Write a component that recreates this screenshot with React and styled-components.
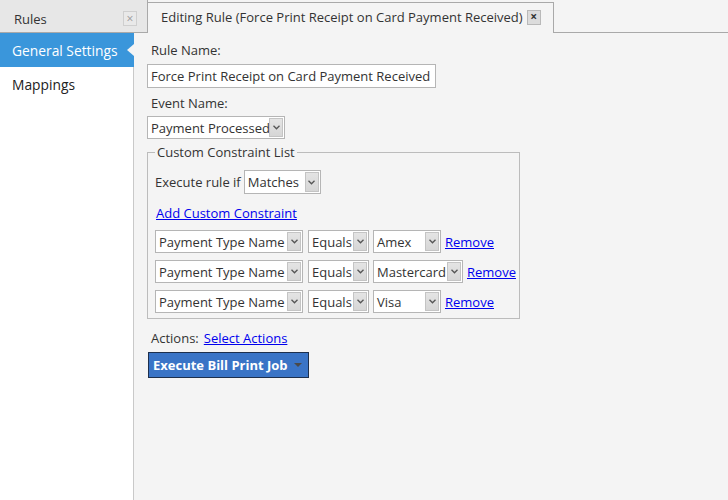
import React from 'react'
import styled, { createGlobalStyle } from 'styled-components'

const GlobalStyle = createGlobalStyle`
  html, body {
    margin: 0;
    padding: 0;
    background: #f4f4f4;
  }
  body {
    font-family: "Open Sans", "Noto Sans", "DejaVu Sans", sans-serif;
    font-size: 13px;
    color: #333;
  }
`;

const Shell = styled.div`
  display: grid;
  grid-template-rows: 33px 1fr;
  height: 500px;
  width: 728px;
  overflow: hidden;
`;

const TabStrip = styled.div`
  display: flex;
  align-items: stretch;
`;

const SideTab = styled.div`
  box-sizing: border-box;
  width: 148px;
  display: flex;
  align-items: center;
  justify-content: space-between;
  padding: 5px 10px 0 14px;
  background: #e7e7e7;
  border-right: 1px solid #a9a9a9;
  border-bottom: 1px solid #a9a9a9;
  color: #333;
`;

const DocTab = styled.div`
  box-sizing: border-box;
  margin-top: 2px;
  display: flex;
  align-items: center;
  gap: 4px;
  padding: 0 12px 2px 13px;
  background: #f4f4f4;
  border-top: 1px solid #a9a9a9;
  border-right: 1px solid #a9a9a9;
  color: #333;
`;

const TabFill = styled.div`
  flex: 1;
  border-bottom: 1px solid #a9a9a9;
`;

const CloseBox = styled.span`
  box-sizing: border-box;
  width: 14px;
  height: 15px;
  display: flex;
  align-items: center;
  justify-content: center;
  border: 1px solid ${p => (p.$active ? '#b9b9b9' : '#cfcfcf')};
  background: ${p => (p.$active ? '#dcdcdc' : '#e9e9e9')};
  color: ${p => (p.$active ? '#333' : '#999')};
  font-size: 12px;
  font-weight: ${p => (p.$active ? 700 : 400)};
  line-height: 1;
`;

const Body = styled.div`
  display: flex;
  min-height: 0;
`;

const Sidebar = styled.nav`
  box-sizing: border-box;
  width: 134px;
  background: #fff;
  border-right: 1px solid #c9c9c9;
  display: flex;
  flex-direction: column;
  font-size: 13.8px;
`;

const NavItem = styled.div`
  position: relative;
  height: 34px;
  display: flex;
  align-items: center;
  padding-left: 12px;
  background: ${p => (p.$active ? '#3a96db' : 'transparent')};
  color: ${p => (p.$active ? '#fff' : '#222')};
  margin-right: ${p => (p.$active ? '-1px' : '0')};

  ${p => p.$active && `
    &::after {
      content: '';
      position: absolute;
      right: 0;
      top: 11px;
      border-top: 6px solid transparent;
      border-bottom: 6px solid transparent;
      border-right: 7px solid #f4f4f4;
    }
  `}
`;

const Content = styled.main`
  flex: 1;
  padding: 8px 13px 0 13px;
  display: flex;
  flex-direction: column;
  align-items: flex-start;
`;

const Label = styled.div`
  line-height: 18px;
  margin-left: 4px;
  margin-top: ${p => p.$top || 0}px;
`;

const TextInput = styled.div`
  box-sizing: border-box;
  width: 289px;
  height: 24px;
  margin-top: 5px;
  padding-left: 3px;
  display: flex;
  align-items: center;
  background: #fff;
  border: 1px solid #b5b5b5;
  white-space: nowrap;
`;

const DropWrap = styled.div`
  box-sizing: border-box;
  width: ${p => p.$w}px;
  height: ${p => p.$h || 23}px;
  display: flex;
  align-items: stretch;
  background: #fff;
  border: 1px solid #b5b5b5;
  padding: 1px;
  flex-shrink: 0;
`;

const DropText = styled.span`
  flex: 1;
  display: flex;
  align-items: center;
  padding-left: 2px;
  white-space: nowrap;
  overflow: hidden;
`;

const DropArrow = styled.span`
  box-sizing: border-box;
  width: 14px;
  display: flex;
  align-items: center;
  justify-content: center;
  background: linear-gradient(#e4e4e4, #d6d6d6);
  border: 1px solid #c4c4c4;
`;

const Dropdown = ({ w, h, children }) => (
  <DropWrap $w={w} $h={h}>
    <DropText>{children}</DropText>
    <DropArrow>
      <svg width="7" height="5" viewBox="0 0 7 5">
        <path d="M0.5 0.8 L3.5 3.8 L6.5 0.8" fill="none" stroke="#555" strokeWidth="1.3" />
      </svg>
    </DropArrow>
  </DropWrap>
);

const Constraints = styled.fieldset`
  box-sizing: border-box;
  width: 373px;
  min-width: 0;
  margin: 4px 0 0 0;
  padding: 9px 2px 5px 7px;
  border: 1px solid #bcbcbc;
  display: flex;
  flex-direction: column;
  align-items: flex-start;
`;

const Legend = styled.legend`
  padding: 0 2px;
  line-height: 18px;
`;

const Row = styled.div`
  display: flex;
  align-items: center;
  gap: ${p => p.$gap || 4}px;
  margin-top: ${p => p.$top || 0}px;
  margin-left: ${p => p.$left || 0}px;
`;

const Link = styled.a`
  color: #0000ee;
  text-decoration: underline;
  line-height: 18px;
  cursor: pointer;
  margin-top: ${p => p.$top || 0}px;
  margin-left: ${p => p.$left || 0}px;
`;

const ActionsLine = styled.div`
  display: flex;
  gap: 5px;
  line-height: 18px;
  margin: 10px 0 0 4px;
`;

const ActionButton = styled.button`
  box-sizing: border-box;
  width: 161px;
  height: 26px;
  margin: 5px 0 0 1px;
  padding: 0 6px 0 4px;
  display: flex;
  align-items: center;
  justify-content: space-between;
  background: #3a74c6;
  border: 1px solid #1d2f4c;
  border-radius: 0;
  color: #fff;
  font: inherit;
  font-weight: 700;
`;

const Caret = styled.span`
  width: 0;
  height: 0;
  border-left: 4px solid transparent;
  border-right: 4px solid transparent;
  border-top: 4px solid #4a4a4a;
`;

const constraintRows = [
  { value: 'Amex', w: 68 },
  { value: 'Mastercard', w: 90 },
  { value: 'Visa', w: 68 },
];

const App = () => {
  return (
    <Shell>
      <GlobalStyle />
      <TabStrip>
        <SideTab>
          Rules
          <CloseBox>×</CloseBox>
        </SideTab>
        <DocTab>
          Editing Rule (Force Print Receipt on Card Payment Received)
          <CloseBox $active>×</CloseBox>
        </DocTab>
        <TabFill />
      </TabStrip>
      <Body>
        <Sidebar>
          <NavItem $active>General Settings</NavItem>
          <NavItem>Mappings</NavItem>
        </Sidebar>
        <Content>
          <Label>Rule Name:</Label>
          <TextInput>Force Print Receipt on Card Payment Received</TextInput>
          <Label $top={6}>Event Name:</Label>
          <Row $top={4}>
            <Dropdown w={138}>Payment Processed</Dropdown>
          </Row>
          <Constraints>
            <Legend>Custom Constraint List</Legend>
            <Row $gap={3}>
              Execute rule if
              <Dropdown w={77} h={24}>Matches</Dropdown>
            </Row>
            <Link $top={10} $left={1}>Add Custom Constraint</Link>
            {constraintRows.map((r, i) => (
              <Row key={r.value} $top={i === 0 ? 8 : 7}>
                <Dropdown w={148}>Payment Type Name</Dropdown>
                <Row $gap={4} $left={1}>
                  <Dropdown w={61}>Equals</Dropdown>
                  <Dropdown w={r.w}>{r.value}</Dropdown>
                </Row>
                <Link>Remove</Link>
              </Row>
            ))}
          </Constraints>
          <ActionsLine>
            Actions:
            <Link>Select Actions</Link>
          </ActionsLine>
          <ActionButton>
            Execute Bill Print Job
            <Caret />
          </ActionButton>
        </Content>
      </Body>
    </Shell>
  )
}

export default App
